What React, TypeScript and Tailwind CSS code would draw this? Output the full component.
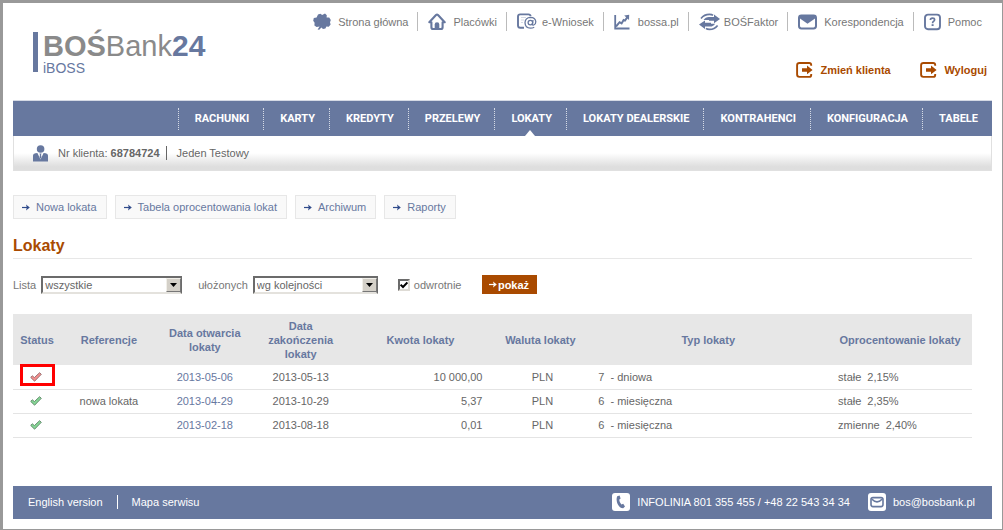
import React, { useState } from 'react';

const topLinks = [
  { label: 'Strona główna', icon: LeafIcon, gap: 'gap-[7px]' },
  { label: 'Placówki', icon: HomeIcon, gap: 'gap-[7px]' },
  { label: 'e-Wniosek', icon: FormIcon, gap: 'gap-[5px]' },
  { label: 'bossa.pl', icon: ChartIcon, gap: 'gap-2' },
  { label: 'BOŚFaktor', icon: FactorIcon, gap: 'gap-1' },
  { label: 'Korespondencja', icon: MailIcon, gap: 'gap-[7px]' },
  { label: 'Pomoc', icon: HelpIcon, gap: 'gap-[7px]' },
];

const menu = [
  'RACHUNKI',
  'KARTY',
  'KREDYTY',
  'PRZELEWY',
  'LOKATY',
  'LOKATY DEALERSKIE',
  'KONTRAHENCI',
  'KONFIGURACJA',
  'TABELE',
];

const actions = ['Nowa lokata', 'Tabela oprocentowania lokat', 'Archiwum', 'Raporty'];

const columns = [
  { label: 'Status', width: 'w-[5%]' },
  { label: 'Referencje', width: 'w-[10%]' },
  { label: 'Data otwarcia lokaty', width: 'w-[10%]' },
  { label: 'Data zakończenia lokaty', width: 'w-[10%]' },
  { label: 'Kwota lokaty', width: 'w-[15%]' },
  { label: 'Waluta lokaty', width: 'w-[10%]' },
  { label: 'Typ lokaty', width: 'w-[25%]' },
  { label: 'Oprocentowanie lokaty', width: 'w-[15%]' },
];

const deposits = [
  { marked: true, ref: '', opened: '2013-05-06', closed: '2013-05-13', amount: '10 000,00', count: '7', unit: 'dniowa', kind: 'stałe', rate: '2,15%' },
  { marked: false, ref: 'nowa lokata', opened: '2013-04-29', closed: '2013-10-29', amount: '5,37', count: '6', unit: 'miesięczna', kind: 'stałe', rate: '2,35%' },
  { marked: false, ref: '', opened: '2013-02-18', closed: '2013-08-18', amount: '0,01', count: '6', unit: 'miesięczna', kind: 'zmienne', rate: '2,40%' },
];

function LeafIcon() {
  return (
    <svg width="18" height="18" viewBox="0 0 18 18" fill="#67789f" aria-hidden="true">
      <path d="M5 1.6 L7.4 0.8 L9.2 2 L12 0.6 L13.8 2.2 L13.6 4.4 L16.2 4.6 L17.8 7 L17 9.2 L17.6 11.4 L15.8 13.8 L13.4 13.6 L12.4 15.6 L10 16 L8.4 14.4 L6.2 16.8 L4.6 16.6 L6.6 13.6 L3.6 14 L1.4 12.6 L1.6 9.8 L0.2 7.8 L0.8 5 L3.6 4.6Z" />
    </svg>
  );
}

function HomeIcon() {
  return (
    <svg width="18" height="18" viewBox="0 0 18 18" fill="none" aria-hidden="true">
      <path d="M1.3 9.2 L8 2 Q9 1.1 10 2 L16.7 9.2 H14.6 V14.2 Q14.6 16 12.8 16 H5.2 Q3.4 16 3.4 14.2 V9.2Z" stroke="#67789f" strokeWidth="2.1" strokeLinejoin="round" />
      <path d="M6.7 16 V11.6 Q6.7 9.2 9 9.2 Q11.3 9.2 11.3 11.6 V16Z" fill="#67789f" />
    </svg>
  );
}

function FormIcon() {
  return (
    <svg width="20" height="18" viewBox="0 0 20 18" fill="none" aria-hidden="true">
      <path d="M7 14.8 H3.2 Q1 14.8 1 12.6 V3.6 Q1 1.4 3.2 1.4 H11.4 Q13.4 1.4 13.6 3.2" stroke="#67789f" strokeWidth="1.9" />
      <path d="M4 4.5 H9 M4 7 H7 M4 9.5 H6" stroke="#d5dae5" />
      <circle cx="13.4" cy="9.6" r="2.3" stroke="#67789f" strokeWidth="1.3" />
      <path d="M16 7 L15.4 11 Q15.4 12.4 16.8 12 Q19 11 18.8 8.6 Q18.2 4.3 13.6 4.3 Q8.2 4.5 8 9.8 Q8.2 15 13.4 15.2 Q15.6 15.2 17.2 14.2" stroke="#67789f" strokeWidth="1.3" />
    </svg>
  );
}

function ChartIcon() {
  return (
    <svg width="16" height="18" viewBox="0 0 16 18" fill="none" aria-hidden="true">
      <path d="M1.2 2 V15.5 H15.5" stroke="#67789f" strokeWidth="1.8" />
      <path d="M2 13.5 L5.6 9.2 L7.6 10.4 L9.6 7 L11 7.6 L13.4 4.2" stroke="#67789f" strokeWidth="2" />
      <path d="M10.2 2.6 L15.2 1.8 L15 7Z" fill="#67789f" />
    </svg>
  );
}

function FactorIcon() {
  return (
    <svg width="21" height="18" viewBox="0 0 21 18" aria-hidden="true">
      <path d="M2 5.4 Q5.2 1.4 10.4 1.4 Q13 1.4 14 2.4 M18.6 12.4 Q15.4 16.4 10.6 16.4 Q8 16.4 7 15.4" fill="none" stroke="#67789f" strokeWidth="1.6" />
      <path d="M4.6 7 Q6.4 4 10 4 H15 V1.4 L21 6 L15 10.2 V7.8 H10 V7Z" fill="#67789f" />
      <path d="M16 10.8 Q14.6 13.6 11 13.6 H6 V16 L0 11.6 L6 7.6 V9.8 H12 V10.8Z" fill="#67789f" />
    </svg>
  );
}

function MailIcon() {
  return (
    <svg width="19" height="18" viewBox="0 0 19 18" aria-hidden="true">
      <rect x="1" y="2.4" width="17" height="13" rx="2.4" fill="#fff" stroke="#67789f" strokeWidth="2" />
      <path d="M2 2.6 H17 V5.6 L9.5 10.8 L2 5.6Z" fill="#67789f" />
    </svg>
  );
}

function HelpIcon() {
  return (
    <svg width="17" height="18" viewBox="0 0 17 18" fill="none" aria-hidden="true">
      <rect x="1" y="1.6" width="15" height="14.6" rx="3" stroke="#67789f" strokeWidth="1.9" />
      <path d="M6.4 7 Q6.4 5.2 8.5 5.2 Q10.6 5.2 10.6 6.8 Q10.6 7.8 9.4 8.4 Q8.6 8.9 8.6 10.2" stroke="#67789f" strokeWidth="1.7" />
      <rect x="7.6" y="11.2" width="2" height="1.8" fill="#67789f" />
    </svg>
  );
}

function ExitIcon() {
  return (
    <svg width="17" height="16" viewBox="0 0 17 16" fill="none" aria-hidden="true">
      <path d="M15.2 3.8 V3 Q15.2 1 13.2 1 H3.4 Q1.1 1 1.1 3.2 V12.6 Q1.1 14.9 3.4 14.9 H13.2 Q15.2 14.9 15.2 12.9 V12" stroke="#a94a00" strokeWidth="1.9" />
      <path d="M6 6.2 H11 V3.6 L16.6 8 L11 12.2 V9.8 H6Z" fill="#a94a00" />
    </svg>
  );
}

function ClientIcon() {
  return (
    <svg width="15" height="17" viewBox="0 0 15 17" aria-hidden="true">
      <circle cx="7.6" cy="4" r="3.8" fill="#67789f" />
      <path d="M0 16.4 V10.6 Q0 8.4 2.4 8.2 L4.4 8 L7.5 14.6 L10.6 8 L12.6 8.2 Q15 8.4 15 10.6 V16.4Z" fill="#67789f" />
      <path d="M6.4 8.6 H8.6 L8 10 L8.4 12 L7.5 14 L6.6 12 L7 10Z" fill="#67789f" />
    </svg>
  );
}

function Arrow({ color }: { color: string }) {
  return (
    <svg width="8" height="7" viewBox="0 0 8 7" fill="none" aria-hidden="true">
      <path d="M0 3.5 H6" stroke={color} strokeWidth="1.2" />
      <path d="M4 0.5 L7.8 3.5 L4 6.5 L4.8 3.5Z" fill={color} />
    </svg>
  );
}

function StatusIcon({ pending }: { pending: boolean }) {
  return (
    <svg width="12" height="10" viewBox="0 0 12 10" role="img" aria-label={pending ? 'W trakcie' : 'Zrealizowana'}>
      <path
        d="M0.7 5.4 L2.3 3.8 L4.4 5.6 L9.6 0.7 L11.3 2.3 L4.6 9.2Z"
        fill={pending ? '#f58f8f' : '#86d796'}
        stroke={pending ? '#8d6a6a' : '#5c8265'}
        strokeWidth="0.9"
      />
    </svg>
  );
}

function Logo() {
  return (
    <a href="#" className="flex h-[42px] gap-[5px]" aria-label="BOŚBank24 iBOSS">
      <span className="mt-[2px] w-[5px] bg-[#67789f]" />
      <span className="flex flex-col">
        <span className="flex items-baseline pt-px text-[29px] leading-[30px] text-[#8a8a8a]">
          <b>BOŚ</b>
          <span>Bank</span>
          <b className="text-[30px] text-[#67789f]">24</b>
        </span>
        <span className="text-[14px] leading-[14px] text-[#67789f]">iBOSS</span>
      </span>
    </a>
  );
}

interface SelectBoxProps {
  id: string;
  width: string;
  options: string[];
}

function SelectBox({ id, width, options }: SelectBoxProps) {
  return (
    <span className={`relative flex h-[18px] ${width}`}>
      <select
        id={id}
        className="w-full appearance-none rounded-none border-2 border-t-[#6b6b6b] border-l-[#6b6b6b] border-r-[#6b6b6b] border-b-[#e4e2dd] bg-white pl-[2px] text-[11px] leading-[14px] text-[#666]"
      >
        {options.map((o) => (
          <option key={o}>{o}</option>
        ))}
      </select>
      <span className="pointer-events-none absolute top-[2px] right-px flex h-[14px] w-[15px] items-center justify-center border border-t-[#f1efe9] border-l-[#f1efe9] border-r-[#777] border-b-[#777] bg-[#d4d0c8]">
        <svg width="7" height="4" viewBox="0 0 7 4" aria-hidden="true">
          <path d="M0 0 H7 L3.5 4Z" fill="#000" />
        </svg>
      </span>
    </span>
  );
}

function Header() {
  return (
    <header className="flex h-[97px] items-start justify-between">
      <div className="pt-[27px] pl-5">
        <Logo />
      </div>
      <div className="flex flex-col items-end">
        <nav className="flex pt-[9px] pr-[10px]">
          {topLinks.map(({ label, icon: Icon, gap }, i) => (
            <a
              key={label}
              href="#"
              className={`flex h-[19px] items-center whitespace-nowrap ${gap} ${i > 0 ? 'border-l border-[#bbb] pl-[10px]' : ''} ${i < topLinks.length - 1 ? 'pr-[9px]' : ''}`}
            >
              <Icon />
              {label}
            </a>
          ))}
        </nav>
        <div className="flex gap-[26px] pt-[31px] pr-[5px] font-bold text-[#a94a00]">
          <a href="#" className="flex w-[98px] items-center gap-[7px] whitespace-nowrap">
            <ExitIcon />
            Zmień klienta
          </a>
          <a href="#" className="flex items-center gap-[7px]">
            <ExitIcon />
            Wyloguj
          </a>
        </div>
      </div>
    </header>
  );
}

function MainMenu() {
  return (
    <nav className="flex h-9 justify-end border-t border-[#d5dae5] bg-[#67789f] font-[Roboto,sans-serif] font-bold text-white">
      {menu.map((item) => (
        <a key={item} href="#" className="relative flex items-center pr-[14px] whitespace-nowrap">
          <span className="mr-4 h-[22px] border-l border-dotted border-[#d5dae5]" />
          {item}
          {item === 'LOKATY' && (
            <svg className="absolute bottom-0 left-[31px]" width="10" height="6" viewBox="0 0 10 6" aria-hidden="true">
              <path d="M0 6 L5 0 L10 6Z" fill="#fff" />
            </svg>
          )}
        </a>
      ))}
    </nav>
  );
}

function Filters() {
  const [reversed, setReversed] = useState(true);

  return (
    <form className="mt-4 flex h-[19px] items-center" onSubmit={(e) => e.preventDefault()}>
      <label htmlFor="lista" className="mr-[5px]">Lista</label>
      <SelectBox id="lista" width="w-[141px]" options={['wszystkie', 'aktywne', 'zakończone']} />
      <label htmlFor="kolejnosc" className="mr-[5px] ml-4">ułożonych</label>
      <SelectBox id="kolejnosc" width="w-[125px]" options={['wg kolejności', 'wg daty', 'wg kwoty']} />
      <span className="relative mr-1 ml-5 flex size-3">
        <input
          id="odwrotnie"
          type="checkbox"
          checked={reversed}
          onChange={(e) => setReversed(e.target.checked)}
          className="size-3 appearance-none border-2 border-t-[#6b6b6b] border-l-[#6b6b6b] border-r-[#dedbd5] border-b-[#dedbd5] bg-white"
        />
        {reversed && (
          <svg className="pointer-events-none absolute top-[2px] left-[2px]" width="8" height="8" viewBox="0 0 8 8" fill="none" aria-hidden="true">
            <path d="M0.6 3.6 L3 6 L7.4 1.4" stroke="#000" strokeWidth="2" />
          </svg>
        )}
      </span>
      <label htmlFor="odwrotnie">odwrotnie</label>
      <button type="submit" className="ml-5 flex h-[19px] w-[55px] cursor-pointer items-center justify-center gap-px bg-[#a94a00] font-bold text-white">
        <Arrow color="#fff" />
        pokaż
      </button>
    </form>
  );
}

function DepositsTable() {
  return (
    <table className="mt-5 w-full table-fixed border-collapse">
      <thead>
        <tr className="h-[51px] bg-[#e7e7e7] text-[#67789f]">
          {columns.map((c) => (
            <th key={c.label} className={`px-[7px] py-1 text-center leading-[14px] font-bold ${c.width}`}>
              {c.label}
            </th>
          ))}
        </tr>
      </thead>
      <tbody className="text-[#666]">
        {deposits.map((d) => (
          <tr key={d.opened} className="h-[24px] border-b border-[#e4e4e4]">
            <td className="relative">
              <span className="flex justify-center pr-[2px]">
                <StatusIcon pending={d.marked} />
              </span>
              {d.marked && <span className="absolute -top-px left-[7px] h-[22px] w-[35px] border-3 border-[#f00]" />}
            </td>
            <td className="text-center">{d.ref}</td>
            <td className="text-center">
              <a href="#" className="text-[#67789f]">{d.opened}</a>
            </td>
            <td className="text-center">{d.closed}</td>
            <td className="pr-[10px] text-right">{d.amount}</td>
            <td className="pl-1 text-center">PLN</td>
            <td className="pl-[10px]">
              {d.count}
              <span className="ml-[6px]">- {d.unit}</span>
            </td>
            <td className="pl-[10px]">
              {d.kind}
              <span className="ml-[6px]">{d.rate}</span>
            </td>
          </tr>
        ))}
      </tbody>
    </table>
  );
}

function Footer() {
  return (
    <footer className="mt-12 flex h-[33px] items-center justify-between bg-[#67789f] pr-[17px] pl-[15px] text-white">
      <div className="flex items-center leading-[14px]">
        <a href="#" className="border-r border-white pr-[14px]">English version</a>
        <a href="#" className="pl-[14px]">Mapa serwisu</a>
      </div>
      <div className="flex items-center gap-[18px]">
        <span className="flex items-center gap-[7px]">
          <svg width="18" height="18" viewBox="0 0 18 18" aria-hidden="true">
            <rect width="18" height="18" rx="3" fill="#fff" />
            <path d="M5.2 3.2 L7.6 2.6 L8.6 5.6 L7.2 6.8 Q7.4 9.6 9.4 11.4 L11.2 10.8 L13 13.4 L11.2 15.2 Q7.6 15.2 5.6 11 Q3.8 6.4 5.2 3.2Z" fill="#67789f" />
          </svg>
          INFOLINIA 801 355 455 / +48 22 543 34 34
        </span>
        <a href="#" className="flex items-center gap-[7px]">
          <svg width="18" height="18" viewBox="0 0 18 18" fill="none" aria-hidden="true">
            <rect width="18" height="18" rx="3" fill="#fff" />
            <rect x="3" y="4.6" width="12" height="9" rx="2" stroke="#67789f" strokeWidth="1.6" />
            <path d="M4 6.2 Q9 11.6 14 6.2" stroke="#67789f" strokeWidth="1.6" />
          </svg>
          bos@bosbank.pl
        </a>
      </div>
    </footer>
  );
}

export default function App() {
  return (
    <div className="min-h-screen border-t-3 border-r border-b border-l-3 border-[#999] bg-white pr-[10px] pb-[10px] pl-[10px] font-['Liberation_Sans',Arial,sans-serif] text-[11px] leading-4 text-[#777]">
      <Header />
      <MainMenu />

      {/* Client bar */}
      <div className="flex h-[35px] items-center border border-t-0 border-[#e0e0e0] bg-linear-to-b from-white from-50% to-[#dedede] to-90% pl-[19px] text-[#666]">
        <ClientIcon />
        <span className="ml-[10px] border-r border-[#666] pr-[6px] leading-[14px]">
          Nr klienta: <b>68784724</b>
        </span>
        <span className="pl-[10px]">Jeden Testowy</span>
      </div>

      <main>
        <div className="mt-6 flex gap-2">
          {actions.map((a) => (
            <a key={a} href="#" className="flex h-6 items-center gap-[6px] border border-[#e7e7e7] bg-[#f9f9f9] pr-[9px] pl-2 text-[#67789f]">
              <Arrow color="#2f4a8a" />
              {a}
            </a>
          ))}
        </div>

        <div className="pr-5">
          <h1 className="mt-4 h-6 border-b border-[#e7e7e7] text-[16px] leading-[22px] font-bold text-[#a94a00]">Lokaty</h1>
          <Filters />
          <DepositsTable />
        </div>
      </main>

      <Footer />
    </div>
  );
}
